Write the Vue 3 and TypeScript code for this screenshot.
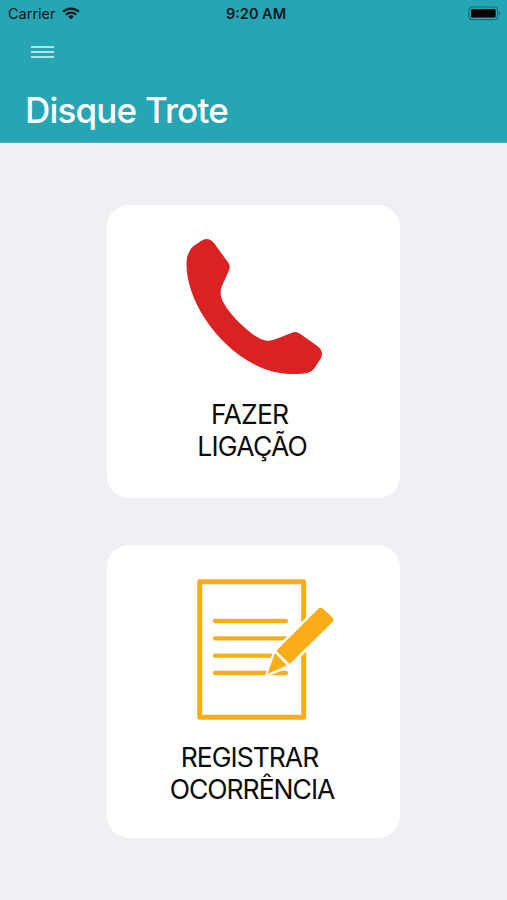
<script setup lang="ts">
interface Action {
  id: 'call' | 'report'
  lines: string[]
}

const title = 'Disque Trote'
const actions: Action[] = [
  { id: 'call', lines: ['FAZER', 'LIGAÇÃO'] },
  { id: 'report', lines: ['REGISTRAR', 'OCORRÊNCIA'] },
]
</script>

<template>
  <div class="screen">
    <header class="header">
      <div class="status">
        <div class="carrier">
          <span class="carrier-name">Carrier</span>
          <svg class="wifi" width="18" height="13" viewBox="0 0 18 13" fill="none" stroke="#051a1c" stroke-width="2.3">
            <path d="M1.1 4.8a11.2 11.2 0 0 1 15.8 0" />
            <path d="M3.9 7.7a7.2 7.2 0 0 1 10.2 0" />
            <path d="M9 12.2 6.3 9.6a3.8 3.8 0 0 1 5.4 0z" fill="#051a1c" stroke="none" />
          </svg>
        </div>
        <time class="clock">9:20 AM</time>
        <svg class="battery" width="33" height="15" viewBox="0 0 33 15">
          <rect x="1" y="1" width="28.6" height="12.6" rx="3.4" fill="none" stroke="#187078" stroke-width="1.2" />
          <rect x="3" y="3" width="24.6" height="8.6" rx="1.4" fill="#000" />
          <path d="M31 5.2c1.7.8 1.7 3.5 0 4.3z" fill="#187078" />
        </svg>
      </div>
      <button class="menu" type="button" aria-label="Menu">
        <span></span><span></span><span></span>
      </button>
      <h1 class="title">{{ title }}</h1>
    </header>

    <main class="actions">
      <button v-for="action in actions" :key="action.id" class="card" :class="action.id" type="button">
        <svg v-if="action.id === 'call'" class="icon" viewBox="0 0 510 480">
          <path
            fill="#da2222"
            d="M56 84Q60 72 70 64L94 47Q112 36 127 49Q134 56 139 64L174 112Q182 123 177 136L156 183Q149 197 154 218C164 246 190 276 218 302C242 324 266 344 290 347Q304 348 316 343L366 323Q379 318 390 326L443 364Q459 376 455 393Q453 401 449 406L432 431Q426 440 412 444C372 451 318 447 274 428C204 399 144 342 104 280C68 224 46 160 50 106Q51 94 56 84Z"
          />
        </svg>
        <svg v-else class="icon" viewBox="0 0 510 495">
          <rect x="59" y="50" width="312" height="407" fill="none" stroke="#fbad18" stroke-width="15" stroke-linejoin="round" />
          <path d="M105 168H318M105 220H318M105 272H318M105 324H318" stroke="#fbad18" stroke-width="13" stroke-linecap="round" />
          <path d="M253 338L281 254L411 125Q422 115 433 125L464 156Q473 166 463 176L331 307Z" fill="#fff" />
          <path d="M289 257L414 132Q422 124 430 132L457 157Q464 165 457 172L329 297Z" fill="#fbad18" />
          <path d="M285 265L320 301L263 326Z" fill="#fbad18" stroke="#fbad18" stroke-width="1" />
        </svg>
        <span class="label">
          <span v-for="line in action.lines" :key="line" class="line">{{ line }}</span>
        </span>
      </button>
    </main>
  </div>
</template>

<style>
body {
  margin: 0;
  background: #efeff4;
}
</style>

<style scoped>
.screen {
  width: 100%;
  height: 900px;
  overflow: hidden;
  box-sizing: border-box;
  background: #efeff4;
  font-family: Inter, 'Liberation Sans', sans-serif;
}
.header {
  height: 143px;
  box-sizing: border-box;
  background: #26a5b4;
  border-bottom: 1px solid #4eafbf;
}
.status {
  display: grid;
  grid-template-columns: 1fr auto 1fr;
  align-items: center;
  height: 27px;
  padding: 0 6px 0 8px;
  color: #051a1c;
}
.carrier {
  display: flex;
  align-items: center;
  gap: 6px;
}
.carrier-name {
  font-size: 14.5px;
  line-height: 27px;
  letter-spacing: 0;
}
.clock {
  padding-left: 3px;
  font-size: 14.5px;
  line-height: 27px;
  font-weight: 600;
}
.battery {
  justify-self: end;
}
.menu {
  display: flex;
  flex-direction: column;
  gap: 3px;
  margin: 18px 0 0 31px;
  padding: 1px 0 0;
  border: 0;
  background: none;
}
.menu span {
  width: 23px;
  height: 2px;
  background: #afe4e9;
}
.title {
  margin: 29px 0 0 25px;
  color: #fff;
  font-size: 35px;
  font-weight: 500;
  line-height: 46px;
  letter-spacing: -0.8px;
  white-space: nowrap;
}
.actions {
  display: flex;
  flex-direction: column;
  align-items: center;
  gap: 47px;
  padding: 62px 0 0;
}
.card {
  display: flex;
  flex-direction: column;
  align-items: center;
  width: 292.6px;
  height: 293px;
  box-sizing: border-box;
  padding: 20px 0 0;
  border: 0;
  border-radius: 22px;
  background: #fff;
  color: #0b0b0b;
  font-family: inherit;
}
.icon {
  display: block;
  width: 170px;
  height: 160px;
}
.call .icon {
  margin-left: 2px;
}
.report .icon {
  height: 165px;
  margin-left: 22.5px;
}
.label {
  display: flex;
  flex-direction: column;
  align-items: center;
  margin-top: 13px;
  padding-right: 2.6px;
  font-size: 26.5px;
  line-height: 32px;
}
.report .label {
  margin-top: 11px;
  padding-right: 3px;
}
.line {
  letter-spacing: -0.75px;
}
.report .line {
  letter-spacing: -1px;
}
.line:first-child {
  padding-right: 5px;
}
</style>
